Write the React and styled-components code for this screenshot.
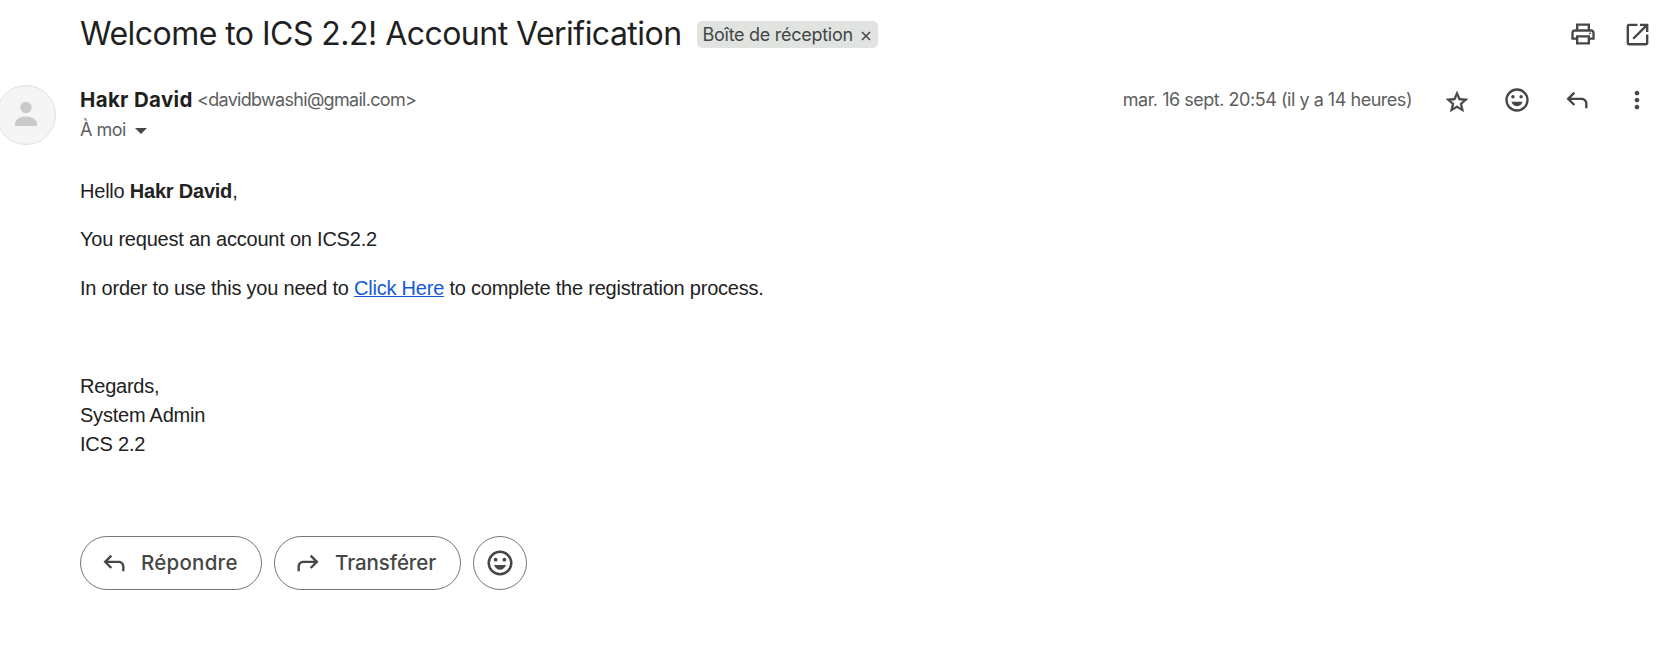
import React from "react";
import styled, { createGlobalStyle } from "styled-components";

const GlobalStyle = createGlobalStyle`
  * { box-sizing: border-box; }
  body { margin: 0; background: #fff; overflow: hidden; }
`;

const ui = `Inter, Roboto, "Liberation Sans", sans-serif`;

const Page = styled.main`
  width: 100%;
  height: 666px;
  background: #fff;
  color: #1f1f1f;
  font-family: ${ui};
`;

const SubjectBar = styled.header`
  display: flex;
  align-items: center;
  height: 68px;
  padding: 0 22px 0 80px;
`;

const Subject = styled.h1`
  margin: 0;
  font-size: 32px;
  font-weight: 400;
  line-height: 40px;
  letter-spacing: -0.53px;
  white-space: nowrap;
`;

const Label = styled.span`
  display: flex;
  align-items: center;
  gap: 8px;
  width: 181px;
  height: 27px;
  margin: 1px 0 0 15px;
  padding: 0 6px;
  border-radius: 5px;
  background: #e1e3e1;
  color: #444746;
  font-size: 18px;
  line-height: 25px;
  letter-spacing: -0.28px;
  white-space: nowrap;

  svg {
    margin-top: 3px;
  }
`;

const Actions = styled.div`
  display: flex;
  align-items: center;
  gap: ${(p) => p.$gap}px;
  margin-left: auto;
`;

const IconButton = styled.button`
  display: flex;
  justify-content: center;
  min-width: 28px;
  padding: ${(p) => p.$drop || 0}px 0 0;
  border: 0;
  background: none;
  color: #444746;
`;

const SenderBar = styled.section`
  display: grid;
  grid-template-columns: 56px auto 1fr;
  column-gap: 24px;
  height: 94px;
  padding: 17px 23px 0 0;
`;

const Avatar = styled.div`
  width: 60px;
  height: 60px;
  margin-left: -4px;
  border: 1px solid #e0e0e0;
  border-radius: 50%;
  background: #f5f5f5;
  overflow: hidden;
`;

const Sender = styled.div`
  display: flex;
  flex-direction: column;
`;

const SenderLine = styled.div`
  display: flex;
  height: 30px;
  line-height: 30px;
  white-space: nowrap;
`;

const Name = styled.span`
  width: 117px;
  font-size: 20.5px;
  font-weight: 700;
  letter-spacing: 0.33px;
`;

const Muted = styled.span`
  color: #5e5e5e;
  font-size: 18px;
  letter-spacing: ${(p) => p.$track || 0}px;
  white-space: nowrap;
`;

const Timestamp = styled(Muted)`
  margin: -2px -1px 0 0;
`;

const Recipient = styled.div`
  display: flex;
  align-items: center;
  gap: 9px;
  height: 30px;
  line-height: 30px;
`;

const Caret = styled.span`
  border: 6px solid transparent;
  border-top-color: #444746;
  border-bottom: 0;
  margin-top: 1px;
`;

const Meta = styled(Actions)`
  align-self: start;
  height: 30px;
`;

const Body = styled.article`
  padding: 15px 80px 0;
  color: #222;
  font: 20px/29px "Liberation Sans", Arial, sans-serif;
  letter-spacing: -0.22px;
`;

const Paragraph = styled.p`
  margin: 0 0 ${(p) => p.$after ?? 20}px;
`;

const Link = styled.a`
  color: #1558d6;
  text-decoration: underline;
  text-decoration-thickness: 1px;
`;

const Replies = styled.footer`
  display: flex;
  gap: 12px;
  padding: 77px 80px 0;
`;

const Pill = styled.button`
  display: flex;
  align-items: center;
  gap: ${(p) => p.$gap || 0}px;
  width: ${(p) => p.$width}px;
  height: 54px;
  padding: 0 0 0 ${(p) => p.$inset}px;
  border: 1px solid #747775;
  border-radius: 27px;
  background: #fff;
  color: #444746;
  font: 500 20.5px/28px ${ui};
  letter-spacing: ${(p) => p.$track || 0}px;
`;

const Svg = styled.svg`
  display: block;
  flex: none;
  fill: currentColor;
`;

const Icon = ({ d, size = 28, stroke = 0 }) => (
  <Svg width={size} height={size} viewBox="0 0 24 24" overflow="visible">
    <path d={d} stroke={stroke ? "currentColor" : "none"} strokeWidth={stroke} />
  </Svg>
);

const paths = {
  print:
    "M19 8h-1V3H6v5H5c-1.66 0-3 1.34-3 3v6h4v4h12v-4h4v-6c0-1.66-1.34-3-3-3zM8 5h8v3H8V5zm8 14H8v-4h8v4zm2-4v-2H6v2H4v-4c0-.55.45-1 1-1h14c.55 0 1 .45 1 1v4h-2z M17.2 11.5a.8.8 0 1 0 1.6 0a.8.8 0 1 0-1.6 0z",
  open:
    "M19 19H5V5h7V3H5c-1.11 0-2 .9-2 2v14c0 1.1.89 2 2 2h14c1.1 0 2-.9 2-2v-7h-2v7zM14 3v2h3.59l-9.83 9.83 1.41 1.41L19 6.41V10h2V3h-7z",
  star:
    "M22 9.24l-7.19-.62L12 2 9.19 8.63 2 9.24l5.46 4.73L5.82 21 12 17.27 18.18 21l-1.63-7.03L22 9.24zM12 15.4l-3.76 2.27 1-4.28-3.32-2.88 4.38-.38L12 6.1l1.71 4.04 4.38.38-3.32 2.88 1 4.28L12 15.4z",
  reply:
    "M19 19v-4c0-1.66-1.34-3-3-3H6.83l3.59 3.59L9 17l-6-6 6-6 1.42 1.41L6.83 10H16c2.76 0 5 2.24 5 5v4h-2z",
  forward:
    "M5 19v-4c0-1.66 1.34-3 3-3h9.17l-3.59 3.59L15 17l6-6-6-6-1.42 1.41L17.17 10H8c-2.76 0-5 2.24-5 5v4h2z",
  smile:
    "M12 2a10 10 0 1 0 0 20a10 10 0 1 0 0-20zm0 2a8 8 0 1 1 0 16a8 8 0 1 1 0-16z M7 9.3a1.5 1.5 0 1 0 3 0a1.5 1.5 0 1 0-3 0z M14 9.3a1.5 1.5 0 1 0 3 0a1.5 1.5 0 1 0-3 0z M7.2 13.5h9.6c-.7 2.1-2.5 3.8-4.8 3.8s-4.1-1.7-4.8-3.8z",
  more:
    "M12 8c1.1 0 2-.9 2-2s-.9-2-2-2-2 .9-2 2 .9 2 2 2zm0 2c-1.1 0-2 .9-2 2s.9 2 2 2 2-.9 2-2-.9-2-2-2zm0 6c-1.1 0-2 .9-2 2s.9 2 2 2 2-.9 2-2-.9-2-2-2z",
};

export default function App() {
  return (
    <Page>
      <GlobalStyle />
      <SubjectBar>
        <Subject>Welcome to ICS 2.2! Account Verification</Subject>
        <Label>
          Boîte de réception
          <Svg width="10" height="10" viewBox="0 0 10 10">
            <path d="M1 1l8 8M9 1l-8 8" stroke="currentColor" strokeWidth="1.6" />
          </Svg>
        </Label>
        <Actions $gap={26}>
          <IconButton aria-label="Imprimer"><Icon d={paths.print} /></IconButton>
          <IconButton aria-label="Ouvrir"><Icon d={paths.open} size={29} /></IconButton>
        </Actions>
      </SubjectBar>
      <SenderBar>
        <Avatar>
          <Svg width="58" height="58" viewBox="0 0 58 58">
            <circle cx="29" cy="21.5" r="5.7" fill="#cacaca" />
            <path d="M18 40v-2.6c0-4.5 6.5-6.9 11-6.9s11 2.4 11 6.9V40z" fill="#cacaca" />
          </Svg>
        </Avatar>
        <Sender>
          <SenderLine>
            <Name>Hakr David</Name>
            <Muted $track={-0.7}>&lt;davidbwashi@gmail.com&gt;</Muted>
          </SenderLine>
          <Recipient>
            <Muted $track={-0.5}>À moi</Muted>
            <Caret />
          </Recipient>
        </Sender>
        <Meta $gap={32}>
          <Timestamp $track={-0.47}>mar. 16 sept. 20:54 (il y a 14 heures)</Timestamp>
          <IconButton aria-label="Suivre" $drop={3}><Icon d={paths.star} size={26} stroke={0.5} /></IconButton>
          <IconButton aria-label="Réagir"><Icon d={paths.smile} /></IconButton>
          <IconButton aria-label="Répondre"><Icon d={paths.reply} /></IconButton>
          <IconButton aria-label="Plus"><Icon d={paths.more} /></IconButton>
        </Meta>
      </SenderBar>
      <Body>
        <Paragraph $after={19}>Hello <b>Hakr David</b>,</Paragraph>
        <Paragraph>You request an account on ICS2.2</Paragraph>
        <Paragraph $after={69}>
          In order to use this you need to <Link>Click Here</Link> to complete the registration process.
        </Paragraph>
        <Paragraph $after={0}>Regards,<br />System Admin<br />ICS 2.2</Paragraph>
      </Body>
      <Replies>
        <Pill $width={182} $inset={19} $gap={13} $track={0.25}><Icon d={paths.reply} />Répondre</Pill>
        <Pill $width={187} $inset={19} $gap={13} $track={-0.07}><Icon d={paths.forward} />Transférer</Pill>
        <Pill $width={54} $inset={11} aria-label="Réagir"><Icon d={paths.smile} size={30} /></Pill>
      </Replies>
    </Page>
  );
}
